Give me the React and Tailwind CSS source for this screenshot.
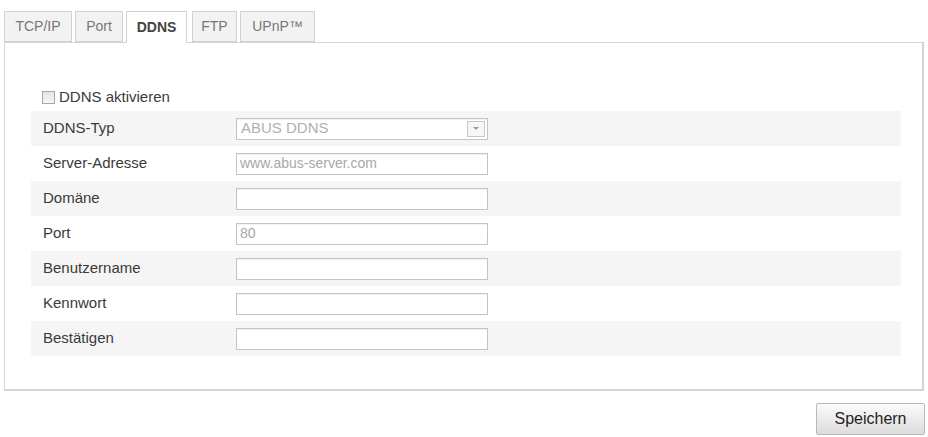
import React from "react";

const tabs = [
  { label: "TCP/IP", w: "w-[68px]", ml: "ml-0" },
  { label: "Port", w: "w-[48px]", ml: "ml-[3px]" },
  { label: "DDNS", w: "w-[61px]", ml: "ml-[3px]", active: true },
  { label: "FTP", w: "w-[45px]", ml: "ml-[5px]" },
  { label: "UPnP™", w: "w-[75px]", ml: "ml-[3px]" },
];

const rows = [
  { label: "DDNS-Typ", kind: "select", value: "ABUS DDNS" },
  { label: "Server-Adresse", kind: "input", value: "www.abus-server.com" },
  { label: "Domäne", kind: "input", value: "" },
  { label: "Port", kind: "input", value: "80" },
  { label: "Benutzername", kind: "input", value: "" },
  { label: "Kennwort", kind: "input", value: "" },
  { label: "Bestätigen", kind: "input", value: "" },
];

function Field({ kind, value }) {
  if (kind === "select") {
    return (
      <div className="flex h-[22px] w-[252px] items-stretch border border-[#c4c4c4] bg-white shadow-[inset_0_1px_1px_rgba(0,0,0,0.06)]">
        <div className="flex flex-1 items-center pl-[4px] text-[15px] text-[#b0b0b0]">{value}</div>
        <div className="my-[2px] mr-[2px] flex w-[18px] items-center justify-center border border-[#c8c8c8] bg-[#f7f7f7]">
          <div className="h-0 w-0 border-x-[3px] border-t-[3px] border-x-transparent border-t-[#9a9a9a]" />
        </div>
      </div>
    );
  }
  return (
    <div className="flex h-[22px] w-[252px] items-center border border-[#c4c4c4] bg-white pl-[3px] text-[14px] text-[#a8a8a8] shadow-[inset_0_1px_1px_rgba(0,0,0,0.06)]">
      {value}
    </div>
  );
}

export default function App() {
  return (
    <div
      className="h-[437px] w-[928px] overflow-hidden bg-white"
      style={{ fontFamily: '"Liberation Sans", Arial, sans-serif' }}
    >
      <div className="flex pl-[4px] pt-[11px]">
        {tabs.map((t) => (
          <div
            key={t.label}
            className={`${t.w} ${t.ml} relative flex h-[31px] items-center justify-center border border-[#d2d2d2] text-[14px] ${
              t.active
                ? "z-10 h-[32px] border-b-0 bg-white font-bold text-[#444]"
                : "bg-[#f2f2f2] text-[#777]"
            }`}
          >
            {t.label}
          </div>
        ))}
      </div>
      <div className="-mt-px ml-[4px] h-[349px] w-[920px] border border-r-2 border-b-2 border-[#d4d4d4] pl-[26px] pt-[41px]">
        <div className="flex h-[27px] items-center pl-[11px]">
          <div className="h-[13px] w-[13px] border border-[#a8a8a8] bg-gradient-to-b from-[#e4e4e4] to-[#f6f6f6]" />
          <span className="ml-[4px] text-[15px] text-[#3a3a3a]">DDNS aktivieren</span>
        </div>
        <div className="flex w-[870px] flex-col">
          {rows.map((r, i) => (
            <div
              key={r.label}
              className={`flex h-[35px] items-center ${i % 2 === 0 ? "bg-[#f5f5f5]" : "bg-white"}`}
            >
              <div className="w-[205px] pl-[12px] text-[15px] text-[#3a3a3a]">{r.label}</div>
              <Field kind={r.kind} value={r.value} />
            </div>
          ))}
        </div>
      </div>
      <div className="flex justify-end pr-[3px] pt-[12px]">
        <button className="flex h-[32px] w-[109px] items-center justify-center rounded-[2px] border border-[#b8b8b8] bg-gradient-to-b from-[#fbfbfb] to-[#dcdcdc] text-[16px] text-[#222]">
          Speichern
        </button>
      </div>
    </div>
  );
}
